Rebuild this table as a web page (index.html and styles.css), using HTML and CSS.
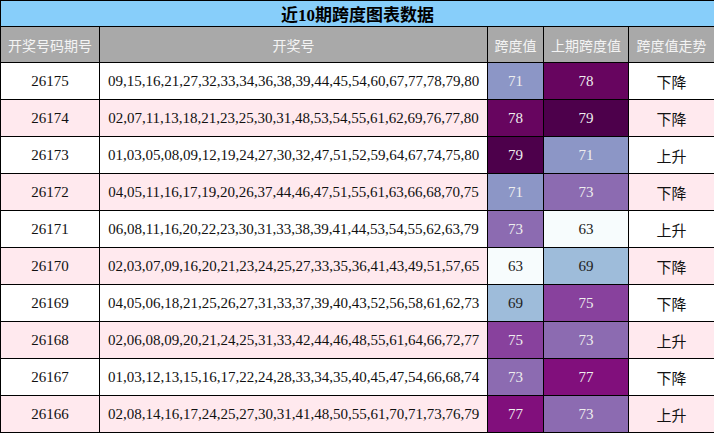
FILE: index.html
```html
<!DOCTYPE html>
<html lang="zh">
<head>
<meta charset="utf-8">
<title>近10期跨度图表数据</title>
<link rel="stylesheet" href="styles.css">
</head>
<body>
<table class="tbl">
  <colgroup>
    <col class="c-issue"><col class="c-nums"><col class="c-span"><col class="c-prev"><col class="c-trend">
  </colgroup>
  <thead>
    <tr class="title-row"><th colspan="5">近10期跨度图表数据</th></tr>
    <tr class="head-row"><th>开奖号码期号</th><th>开奖号</th><th>跨度值</th><th>上期跨度值</th><th>跨度值走势</th></tr>
  </thead>
  <tbody>
    <tr><td>26175</td><td class="nums">09,15,16,21,27,32,33,34,36,38,39,44,45,54,60,67,77,78,79,80</td><td class="v71">71</td><td class="v78">78</td><td class="trend">下降</td></tr>
    <tr class="alt"><td>26174</td><td class="nums">02,07,11,13,18,21,23,25,30,31,48,53,54,55,61,62,69,76,77,80</td><td class="v78">78</td><td class="v79">79</td><td class="trend">下降</td></tr>
    <tr><td>26173</td><td class="nums">01,03,05,08,09,12,19,24,27,30,32,47,51,52,59,64,67,74,75,80</td><td class="v79">79</td><td class="v71">71</td><td class="trend">上升</td></tr>
    <tr class="alt"><td>26172</td><td class="nums">04,05,11,16,17,19,20,26,37,44,46,47,51,55,61,63,66,68,70,75</td><td class="v71">71</td><td class="v73">73</td><td class="trend">下降</td></tr>
    <tr><td>26171</td><td class="nums">06,08,11,16,20,22,23,30,31,33,38,39,41,44,53,54,55,62,63,79</td><td class="v73">73</td><td class="v63">63</td><td class="trend">上升</td></tr>
    <tr class="alt"><td>26170</td><td class="nums">02,03,07,09,16,20,21,23,24,25,27,33,35,36,41,43,49,51,57,65</td><td class="v63">63</td><td class="v69">69</td><td class="trend">下降</td></tr>
    <tr><td>26169</td><td class="nums">04,05,06,18,21,25,26,27,31,33,37,39,40,43,52,56,58,61,62,73</td><td class="v69">69</td><td class="v75">75</td><td class="trend">下降</td></tr>
    <tr class="alt"><td>26168</td><td class="nums">02,06,08,09,20,21,24,25,31,33,42,44,46,48,55,61,64,66,72,77</td><td class="v75">75</td><td class="v73">73</td><td class="trend">上升</td></tr>
    <tr><td>26167</td><td class="nums">01,03,12,13,15,16,17,22,24,28,33,34,35,40,45,47,54,66,68,74</td><td class="v73">73</td><td class="v77">77</td><td class="trend">下降</td></tr>
    <tr class="alt"><td>26166</td><td class="nums">02,08,14,16,17,24,25,27,30,31,41,48,50,55,61,70,71,73,76,79</td><td class="v77">77</td><td class="v73">73</td><td class="trend">上升</td></tr>
  </tbody>
</table>
</body>
</html>
```

FILE: styles.css
```css
html, body {
  margin: 0;
  padding: 0;
  background: #ffffff;
}

.tbl {
  border-collapse: collapse;
  width: 714px;
  table-layout: fixed;
  font-family: "Liberation Serif", "Noto Sans CJK SC", serif;
  font-size: 15px;
  color: #111;
}

.c-issue { width: 99px; }
.c-nums { width: 388px; }
.c-span { width: 56px; }
.c-prev { width: 85px; }
.c-trend { width: 86px; }

.tbl th,
.tbl td {
  border: 1px solid #000;
  text-align: center;
  padding: 0;
  white-space: nowrap;
}

.title-row th {
  background: #87cefa;
  height: 25px;
  font-size: 17px;
  font-weight: bold;
  color: #000;
}

.head-row th {
  background: #a9a9a9;
  color: #f4f4f4;
  font-weight: normal;
  height: 35px;
  font-size: 14px;
}

.tbl td {
  height: 36px;
}

.alt td { background: #ffe9ee; }

.trend { font-size: 15px; }

.tbl td.v63 { background: #f7fcfd; color: #222; }
.tbl td.v69 { background: #9ebcda; color: #222; }
.tbl td.v71 { background: #8c96c6; color: #eeeeee; }
.tbl td.v73 { background: #8c6bb1; color: #eeeeee; }
.tbl td.v75 { background: #88419d; color: #eeeeee; }
.tbl td.v77 { background: #810f7c; color: #eeeeee; }
.tbl td.v78 { background: #67055f; color: #eeeeee; }
.tbl td.v79 { background: #4d004b; color: #eeeeee; }
```
